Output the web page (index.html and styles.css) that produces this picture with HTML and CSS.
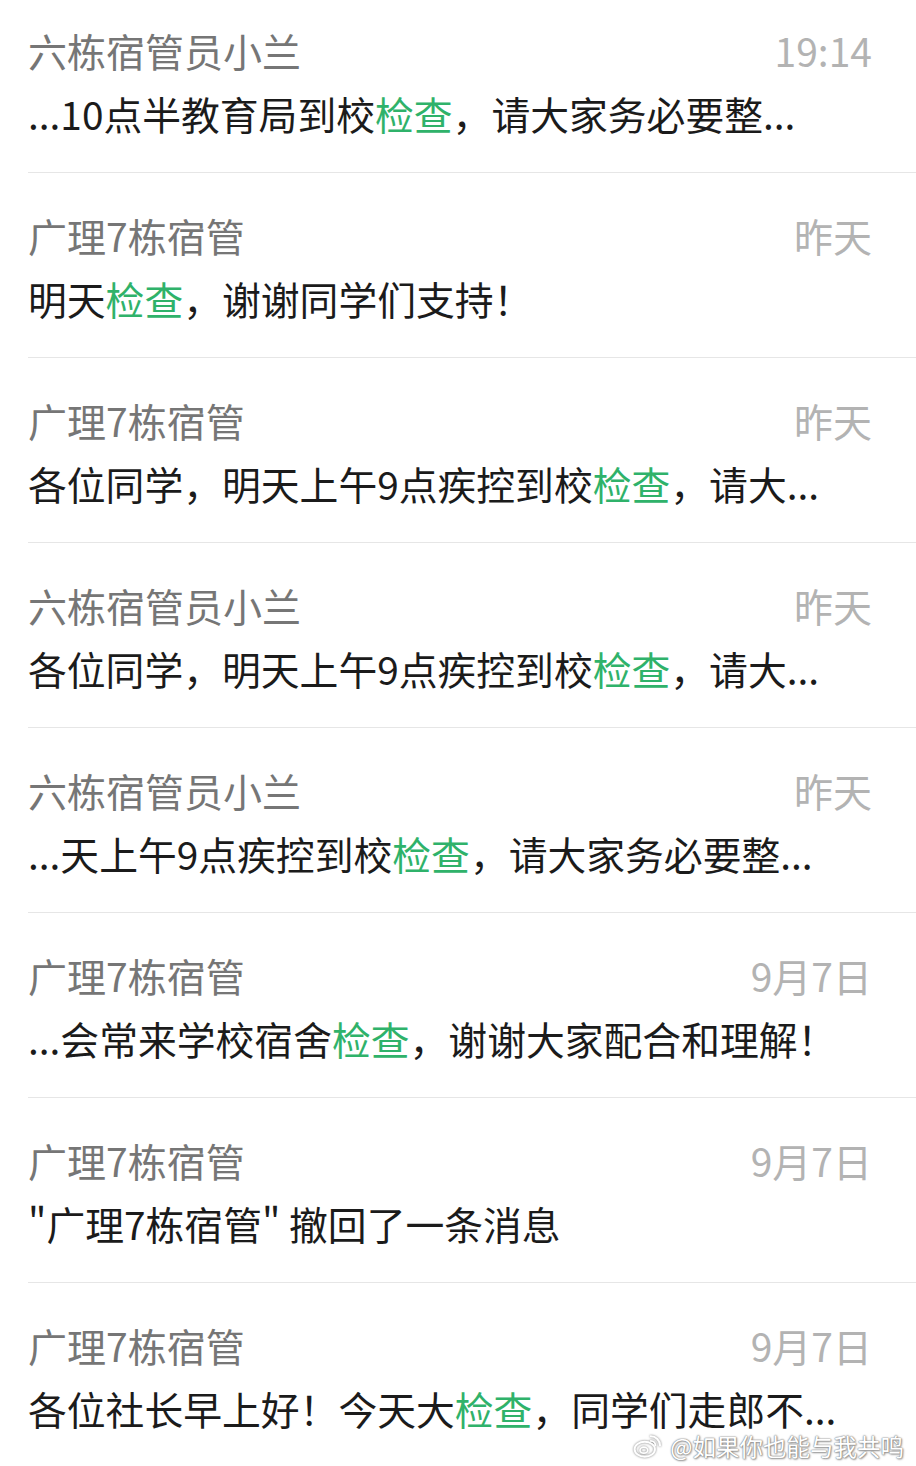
FILE: index.html
```html
<!DOCTYPE html>
<html lang="zh-CN">
<head>
<meta charset="utf-8">
<link rel="stylesheet" href="styles.css">
</head>
<body>
<div class="list">
  <div class="row">
    <div class="head"><span class="name">六栋宿管员小兰</span><span class="time">19:14</span></div>
    <div class="msg">...10点半教育局到校<span class="hl">检查</span>，请大家务必要整...</div>
  </div>
  <div class="row">
    <div class="head"><span class="name">广理7栋宿管</span><span class="time">昨天</span></div>
    <div class="msg">明天<span class="hl">检查</span>，谢谢同学们支持！</div>
  </div>
  <div class="row">
    <div class="head"><span class="name">广理7栋宿管</span><span class="time">昨天</span></div>
    <div class="msg">各位同学，明天上午9点疾控到校<span class="hl">检查</span>，请大...</div>
  </div>
  <div class="row">
    <div class="head"><span class="name">六栋宿管员小兰</span><span class="time">昨天</span></div>
    <div class="msg">各位同学，明天上午9点疾控到校<span class="hl">检查</span>，请大...</div>
  </div>
  <div class="row">
    <div class="head"><span class="name">六栋宿管员小兰</span><span class="time">昨天</span></div>
    <div class="msg">...天上午9点疾控到校<span class="hl">检查</span>，请大家务必要整...</div>
  </div>
  <div class="row">
    <div class="head"><span class="name">广理7栋宿管</span><span class="time">9月7日</span></div>
    <div class="msg">...会常来学校宿舍<span class="hl">检查</span>，谢谢大家配合和理解！</div>
  </div>
  <div class="row">
    <div class="head"><span class="name">广理7栋宿管</span><span class="time">9月7日</span></div>
    <div class="msg">"广理7栋宿管" 撤回了一条消息</div>
  </div>
  <div class="row">
    <div class="head"><span class="name">广理7栋宿管</span><span class="time">9月7日</span></div>
    <div class="msg">各位社长早上好！今天大<span class="hl">检查</span>，同学们走郎不...</div>
  </div>
</div>
<div class="watermark">
  <svg class="wb" width="30" height="24" viewBox="0 0 32 26">
    <ellipse cx="12.5" cy="16.5" rx="11" ry="8" fill="none" stroke="#fff" stroke-width="2.2"/>
    <ellipse cx="11.5" cy="17.5" rx="4.2" ry="3.2" fill="none" stroke="#fff" stroke-width="1.8"/>
    <path d="M19 2.5 A10 10 0 0 1 29 12.5" fill="none" stroke="#fff" stroke-width="2.2" stroke-linecap="round"/>
    <path d="M19 7.5 A5 5 0 0 1 24 12.5" fill="none" stroke="#fff" stroke-width="2" stroke-linecap="round"/>
  </svg>
  <span class="wm-text">@如果你也能与我共鸣</span>
</div>
</body>
</html>
```
FILE: styles.css
```css
html, body {
  margin: 0;
  padding: 0;
  background: #ffffff;
}
body {
  width: 916px;
  height: 1466px;
  overflow: hidden;
  position: relative;
  font-family: "Noto Sans CJK SC", "Noto Sans", sans-serif;
}
.list {
  margin-top: -12px;
  padding-left: 28px;
}
.row {
  box-sizing: border-box;
  height: 185px;
  padding-top: 38px;
  border-bottom: 1px solid #e6e6e6;
}
.head {
  display: flex;
  justify-content: space-between;
  align-items: center;
  height: 48px;
  padding-right: 44px;
}
.name {
  font-size: 39px;
  color: #767676;
  line-height: 48px;
}
.time {
  font-size: 39px;
  color: #b3b3b3;
  line-height: 48px;
}
.msg {
  margin-top: 17px;
  font-size: 38.8px;
  line-height: 44px;
  color: #1b1b1b;
  white-space: nowrap;
}
.hl {
  color: #2fb26a;
}
.watermark {
  position: absolute;
  right: 12px;
  bottom: 8px;
  height: 24px;
  display: flex;
  align-items: center;
  gap: 7px;
}
.wm-text {
  font-size: 23.5px;
  line-height: 24px;
  color: #ffffff;
  text-shadow: 0 0 2px #888, 0 0 1px #666, 1px 1px 2px #999;
}
.wb {
  filter: drop-shadow(0 0 1px #777);
}
```
